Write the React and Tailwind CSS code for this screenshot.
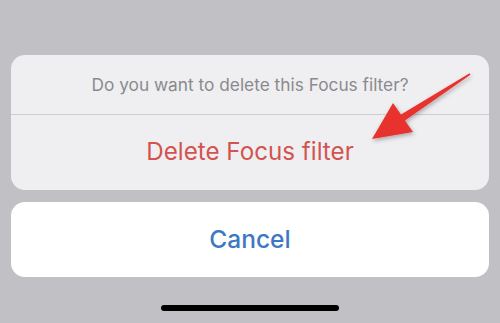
import React from "react";

// Red annotation arrow laid over the sheet
const Arrow = () => (
  <svg
    className="absolute left-0 top-0 pointer-events-none"
    width="500"
    height="323"
    viewBox="0 0 500 323"
  >
    <defs>
      <filter id="arrowShadow" x="-20%" y="-20%" width="140%" height="140%">
        <feDropShadow dx="1" dy="2" stdDeviation="2" floodColor="#000" floodOpacity="0.3" />
      </filter>
    </defs>
    <polygon
      points="372,139 393,103 401,114.6 469.6,73.3 470.4,74.7 405,120.4 413,132"
      fill="#e8312f"
      filter="url(#arrowShadow)"
    />
  </svg>
);

export default function App() {
  return (
    <div
      className="relative w-[500px] h-[323px] overflow-hidden bg-[#c1c1c5] px-[11px] pt-[55px] flex flex-col"
      style={{ fontFamily: "Inter, 'Open Sans', sans-serif" }}
    >
      <div className="bg-[#efeff1] rounded-[14px] flex flex-col">
        <div className="h-[59px] flex items-center justify-center text-[17.3px] text-[#8a8a8e]">
          Do you want to delete this Focus filter?
        </div>
        <div className="h-px bg-[#cdcdd1]" />
        <div className="h-[75px] flex items-center justify-center text-[24.2px] text-[#d2544f]">
          Delete Focus filter
        </div>
      </div>

      <div className="mt-[12px] h-[75px] bg-white rounded-[14px] flex items-center justify-center text-[24.5px] font-medium text-[#3d78c3]">
        Cancel
      </div>

      <div className="flex justify-center mt-[28px]">
        <div className="w-[178px] h-[6px] rounded-full bg-black" />
      </div>

      <Arrow />
    </div>
  );
}
